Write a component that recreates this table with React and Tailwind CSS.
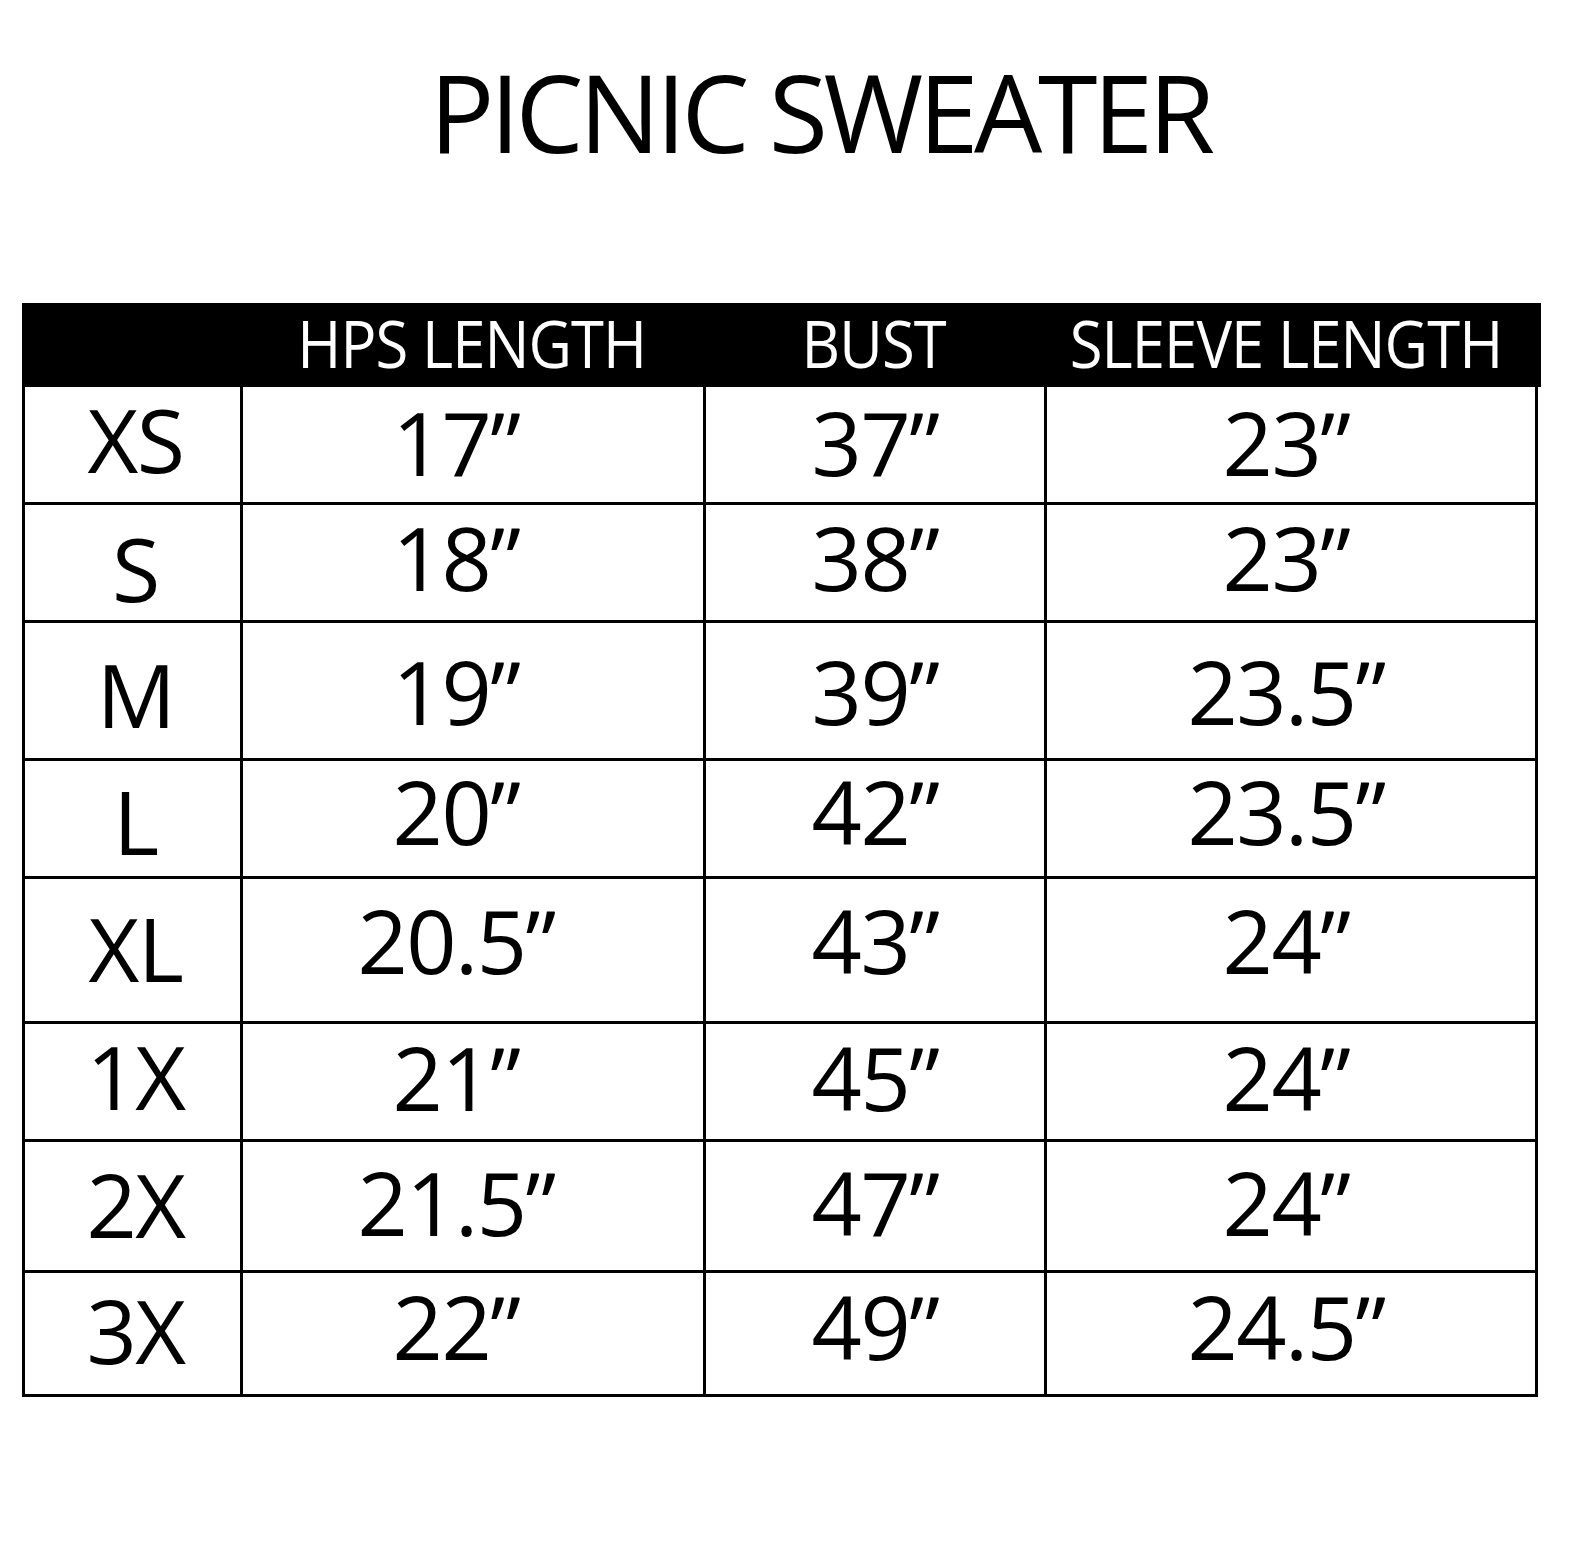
const columns = [
  { label: "HPS LENGTH", pad: "" },
  { label: "BUST", pad: "" },
  { label: "SLEEVE LENGTH", pad: "pr-[14px]" },
];

// per-row vertical nudges: label cell, value cells
const rows = [
  { size: "XS", hps: "17”", bust: "37”", sleeve: "23”", h: "h-[118px]", lp: "pb-[11px]", vp: "pb-[6px]" },
  { size: "S", hps: "18”", bust: "38”", sleeve: "23”", h: "h-[118px]", lp: "pt-[10px]", vp: "pb-[12px]" },
  { size: "M", hps: "19”", bust: "39”", sleeve: "23.5”", h: "h-[138px]", lp: "pt-[7px]", vp: "pt-[1px]" },
  { size: "L", hps: "20”", bust: "42”", sleeve: "23.5”", h: "h-[118px]", lp: "pt-[5px]", vp: "pb-[15px]" },
  { size: "XL", hps: "20.5”", bust: "43”", sleeve: "24”", h: "h-[145px]", lp: "pb-[4px]", vp: "pb-[20px]" },
  { size: "1X", hps: "21”", bust: "45”", sleeve: "24”", h: "h-[118px]", lp: "pb-[11px]", vp: "pb-[9px]" },
  { size: "2X", hps: "21.5”", bust: "47”", sleeve: "24”", h: "h-[131px]", lp: "pb-[5px]", vp: "pb-[9px]" },
  { size: "3X", hps: "22”", bust: "49”", sleeve: "24.5”", h: "h-[124px]", lp: "pb-[8px]", vp: "pb-[16px]" },
];

const font = "font-['Open_Sans','Noto_Sans',sans-serif]";

function Cell({ children, className = "" }) {
  return (
    <div
      className={`flex items-center justify-center text-[88px] leading-none tracking-[-1.5px] text-black ${className}`}
    >
      {children}
    </div>
  );
}

export default function App() {
  return (
    <div className={`min-h-screen w-[1572px] bg-white ${font}`}>
      <h1 className="pl-[68px] pt-[58px] text-center text-[108px] leading-none tracking-[-4.5px] text-black">
        PICNIC SWEATER
      </h1>

      <div className="mt-[137px] ml-[22px]">
        <div className="grid h-[84px] w-[1519px] grid-cols-[218px_463px_341px_1fr] bg-black text-white">
          <div />
          {columns.map((c) => (
            <div
              key={c.label}
              className={`flex items-center justify-center pb-[7px] text-[66px] leading-none tracking-[-1px] ${c.pad}`}
            >
              <span className="scale-x-[0.905] whitespace-nowrap">{c.label}</span>
            </div>
          ))}
        </div>

        <div className="w-[1516px] border-x-[3px] border-black">
          {rows.map((r) => (
            <div
              key={r.size}
              className={`grid ${r.h} grid-cols-[215px_463px_341px_1fr] border-b-[3px] border-black`}
            >
              <Cell className={`pl-[6px] ${r.lp}`}>{r.size}</Cell>
              <Cell className={`border-l-[3px] border-black pr-[34px] ${r.vp}`}>{r.hps}</Cell>
              <Cell className={`border-l-[3px] border-black ${r.vp}`}>{r.bust}</Cell>
              <Cell className={`border-l-[3px] border-black pr-[10px] ${r.vp}`}>{r.sleeve}</Cell>
            </div>
          ))}
        </div>
      </div>
    </div>
  );
}
